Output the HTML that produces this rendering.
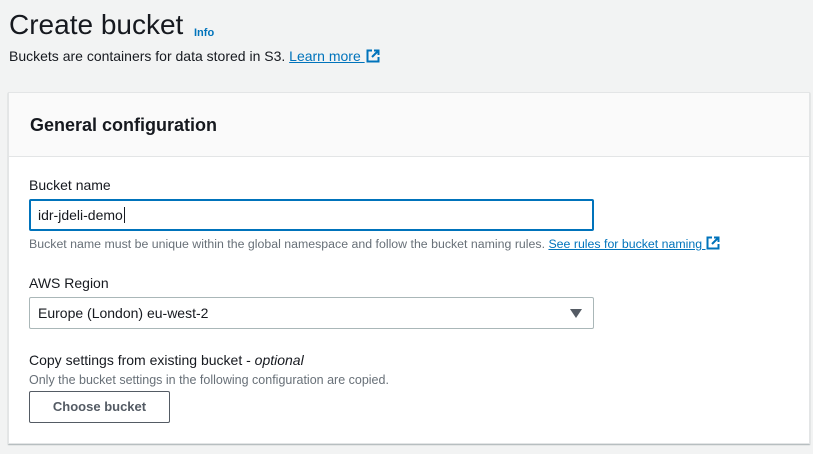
<!DOCTYPE html>
<html><head><meta charset="utf-8"><style>
*{margin:0;padding:0;box-sizing:border-box}
body{width:813px;height:454px;background:#f2f3f3;font-family:"Liberation Sans",sans-serif;color:#16191f;position:relative;overflow:hidden}
.a{position:absolute;white-space:nowrap}
a{color:#0073bb;text-decoration:underline}
.panel{position:absolute;left:8px;top:92px;width:802px;height:352px;background:#fff;border:1px solid #e3e5e6;box-shadow:0 1px 1px rgba(0,28,36,.3)}
.hd{position:absolute;left:0;top:0;width:100%;height:64px;background:#fafafa;border-bottom:1px solid #e3e5e6}
.box{position:absolute;left:29px;width:565px;height:32px;border:1px solid #aab7b8;border-radius:2px;background:#fff}
</style></head><body>
<div class="a" style="left:9px;top:9px;font-size:28px;">Create bucket</div>
<div class="a" style="left:194px;top:27px;font-size:11px;font-weight:bold;color:#0073bb">Info</div>
<div class="a" style="left:9px;top:48px;font-size:14px;">Buckets are containers for data stored in S3. <a>Learn more </a><svg width="14" height="14" viewBox="0 0 14 14" style="vertical-align:-2px;margin-left:1px"><path d="M6 1.5H1.5V12.5H12.5V8M8 1.5H12.5V6M12.5 1.5L6 8" fill="none" stroke="#0073bb" stroke-width="2"/></svg></div>
<div class="panel"><div class="hd"></div>
<div class="a" style="left:21px;top:22px;font-size:18px;font-weight:bold">General configuration</div>
</div>
<div class="a" style="left:29px;top:177px;font-size:14px;">Bucket name</div>
<div class="box" style="top:199px;border:2px solid #0073bb"></div>
<div class="a" style="left:38px;top:207px;font-size:14px;">idr-jdeli-demo<span style="border-left:1px solid #16191f;margin-left:1px"></span></div>
<div class="a" style="left:29px;top:236px;font-size:12.35px;color:#687078">Bucket name must be unique within the global namespace and follow the bucket naming rules. <a>See rules for bucket naming </a><svg width="14" height="14" viewBox="0 0 14 14" style="vertical-align:-2px"><path d="M6 1.5H1.5V12.5H12.5V8M8 1.5H12.5V6M12.5 1.5L6 8" fill="none" stroke="#0073bb" stroke-width="2"/></svg></div>
<div class="a" style="left:29px;top:275px;font-size:14px;">AWS Region</div>
<div class="box" style="top:297px"></div>
<div class="a" style="left:38px;top:305px;font-size:14px;">Europe (London) eu-west-2</div>
<svg class="a" style="left:570px;top:309px" width="12" height="9"><path d="M0 0H12L6 9Z" fill="#545b64"/></svg>
<div class="a" style="left:29px;top:352px;font-size:14px;">Copy settings from existing bucket - <i>optional</i></div>
<div class="a" style="left:29px;top:373px;font-size:12.5px;color:#687078">Only the bucket settings in the following configuration are copied.</div>
<div class="a" style="left:29px;top:391px;width:141px;height:32px;border:1px solid #545b64;border-radius:2px;font-size:13px;font-weight:bold;color:#545b64;text-align:center;line-height:30px">Choose bucket</div>
</body></html>
